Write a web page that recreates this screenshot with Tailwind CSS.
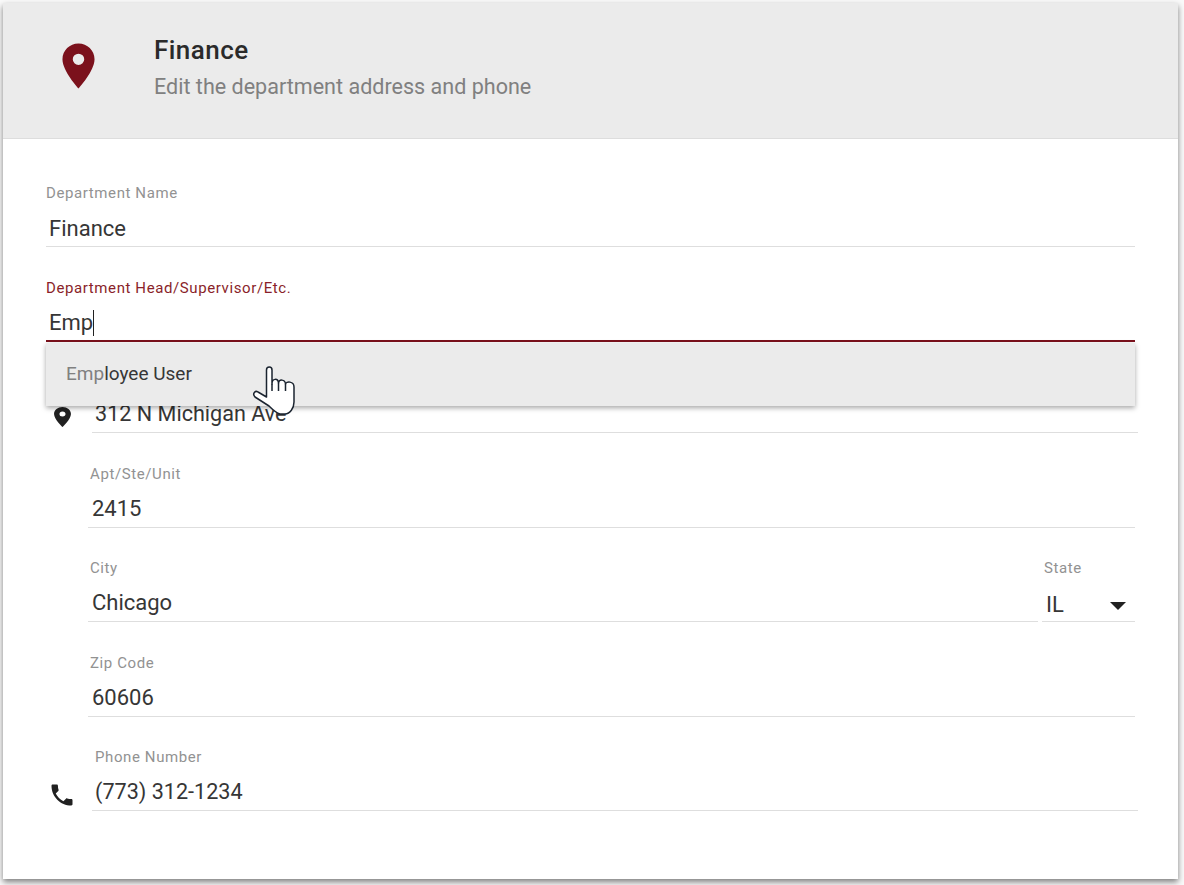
<!DOCTYPE html>
<html lang="en">
<head>
    <meta charset="UTF-8">
    <title>Finance</title>
    <script src="https://cdn.jsdelivr.net/npm/@tailwindcss/browser@4"></script>
</head>
<body class="bg-[#fafafa] font-['Roboto',sans-serif] h-[885px] overflow-hidden">

    <!-- Card -->
    <div class="relative ml-[3px] w-[1175px] h-[876px] translate-y-[3px] bg-white shadow-[0_3px_6px_rgba(0,0,0,0.5)]">

        <!-- Header -->
        <header class="flex h-[136px] bg-[#ebebeb] border-b border-[#dddddd]">
            <div class="w-[151px] pl-[48px] pt-[36px]">
                <svg viewBox="0 0 24 24" class="w-[55px] h-[54px]" preserveAspectRatio="none" fill="#7b111c">
                    <path fill-rule="evenodd" d="M12 2C8.13 2 5 5.13 5 9c0 5.25 7 13 7 13s7-7.75 7-13c0-3.87-3.13-7-7-7zm0 9.5a2.5 2.5 0 1 1 0-5 2.5 2.5 0 0 1 0 5z"/>
                </svg>
            </div>
            <div class="pt-[30px]">
                <h1 class="text-[26px] leading-[34px] font-medium tracking-[0.45px] text-[#2a2a2a]">Finance</h1>
                <p class="text-[21.55px] leading-[40px] text-[#808080]">Edit the department address and phone</p>
            </div>
        </header>

        <!-- Form -->
        <div class="pl-[43px] pr-[43px] pt-[45px] relative">
            <div class="h-[95px]">
                <label class="block text-[15px] leading-[18px] tracking-[0.6px] text-[#929292]">Department Name</label>
                <div class="mt-[10px] h-[35px] border-b border-[#dedede] pl-[3px] text-[22px] leading-[34px] text-[#363636]">Finance</div>
            </div>

            <div class="h-[91px]">
                <label class="block text-[15px] leading-[18px] tracking-[0.6px] text-[#8a1f2a]">Department Head/Supervisor/Etc.</label>
                <div class="mt-[9px] h-[36px] border-b-2 border-[#7b111c] pl-[3px] text-[22px] leading-[34px] text-[#363636] flex items-start">Emp<span class="w-px h-[26px] mt-[4px] bg-[#212121]"></span></div>
            </div>

            <div class="flex h-[95px] -mr-[3px]">
                <div class="w-[46px] pt-[35px]">
                    <svg viewBox="0 0 24 24" class="w-[29px] h-[24px] ml-[2px]" preserveAspectRatio="none" fill="#212121">
                        <path fill-rule="evenodd" d="M12 2C8.13 2 5 5.13 5 9c0 5.25 7 13 7 13s7-7.75 7-13c0-3.87-3.13-7-7-7zm0 9.5a2.5 2.5 0 1 1 0-5 2.5 2.5 0 0 1 0 5z"/>
                    </svg>
                </div>
                <div class="flex-1 pt-[27px]">
                    <div class="h-[36px] border-b border-[#dedede] pl-[3px] text-[21.6px] leading-[34px] text-[#363636]">312 N Michigan Ave</div>
                </div>
            </div>

            <div class="h-[94px] pl-[42px]">
                <label class="block pl-[2px] text-[15px] leading-[18px] tracking-[0.6px] text-[#929292]">Apt/Ste/Unit</label>
                <div class="mt-[9px] h-[36px] border-b border-[#dedede] pl-[4px] text-[22px] leading-[34px] text-[#363636]">2415</div>
            </div>

            <div class="h-[95px] pl-[42px] flex gap-[4px]">
                <div class="flex-1">
                    <label class="block pl-[2px] text-[15px] leading-[18px] tracking-[0.6px] text-[#929292]">City</label>
                    <div class="mt-[9px] h-[36px] border-b border-[#dedede] pl-[4px] text-[22px] leading-[34px] text-[#363636]">Chicago</div>
                </div>
                <div class="w-[93px]">
                    <label class="block pl-[2px] text-[15px] leading-[18px] tracking-[0.6px] text-[#929292]">State</label>
                    <div class="mt-[9px] h-[36px] border-b border-[#dedede] pl-[4px] pr-[9px] text-[22px] leading-[34px] text-[#363636] flex items-start justify-between">
                        <span class="pt-[2px]">IL</span>
                        <span class="mt-[16px] w-0 h-0 border-l-[8px] border-r-[8px] border-t-[8px] border-l-transparent border-r-transparent border-t-[#212121]"></span>
                    </div>
                </div>
            </div>

            <div class="h-[94px] pl-[42px]">
                <label class="block pl-[2px] text-[15px] leading-[18px] tracking-[0.6px] text-[#929292]">Zip Code</label>
                <div class="mt-[9px] h-[36px] border-b border-[#dedede] pl-[4px] text-[22px] leading-[34px] text-[#363636]">60606</div>
            </div>

            <div class="flex -mr-[3px]">
                <div class="w-[46px] pt-[33px]">
                    <svg viewBox="0 0 24 24" class="w-[28px] h-[28px] ml-[2px]" fill="#212121">
                        <path d="M6.62 10.79c1.44 2.83 3.76 5.14 6.59 6.59l2.2-2.2c.27-.27.67-.36 1.02-.24 1.12.37 2.33.57 3.57.57.55 0 1 .45 1 1V20c0 .55-.45 1-1 1-9.39 0-17-7.61-17-17 0-.55.45-1 1-1h3.5c.55 0 1 .45 1 1 0 1.25.2 2.45.57 3.57.11.35.03.74-.25 1.02l-2.2 2.2z"/>
                    </svg>
                </div>
                <div class="flex-1">
                    <label class="block pl-[3px] text-[15px] leading-[18px] tracking-[0.6px] text-[#929292]">Phone Number</label>
                    <div class="mt-[9px] h-[36px] border-b border-[#dedede] pl-[3px] text-[21.6px] leading-[34px] text-[#363636]">(773) 312-1234</div>
                </div>
            </div>

            <!-- Autocomplete menu over the address field -->
            <div class="absolute left-[43px] right-[43px] top-[204px] h-[63px] bg-[#ebebeb] shadow-[0_2px_5px_rgba(0,0,0,0.35)] pl-[20px] pt-[19px] text-[19px] leading-[24px] text-[#363636]"><span class="text-[#808080]">Emp</span>loyee User</div>
        </div>

        <!-- Pointer cursor -->
        <svg viewBox="0 0 60 60" class="absolute left-[242px] top-[357px] w-[60px] h-[60px]" fill="#fff" stroke="#1b2430" stroke-width="1.5" stroke-linejoin="round">
            <path d="M21.5 37 L21.5 10 C21.5 6 27 6 27 10 L27 24 C27 18 33 18 33.5 23 C34 19 40 19 40.5 24 C41 21 49 21 49 27 L49 42 C49 48 45 54 40 54 L35 54 C31 53 27 49 24 46 L10 37 C7 34 10 30 13 32 Z"/>
            <path d="M27 24 L27 31 M33.5 23 L33.5 31 M40.5 24 L40.5 31" fill="none"/>
        </svg>
    </div>

</body>
</html>
